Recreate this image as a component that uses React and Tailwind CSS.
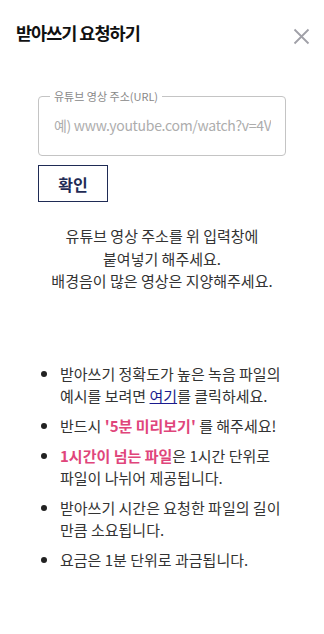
import React from 'react';

const font = { fontFamily: '"Noto Sans CJK KR", "Noto Sans", sans-serif' };

const Bullet = ({ children }) => (
  <li className="flex items-start gap-[13px]">
    <span className="mt-[8px] h-[6px] w-[6px] shrink-0 rounded-full bg-[#222]" />
    <p className="break-keep leading-[22px]">{children}</p>
  </li>
);

const App = () => {
  return (
    <div className="min-h-screen bg-white text-[#333]" style={font}>
      {/* Header */}
      <div className="flex items-center justify-between pl-[16px] pr-[14px] pt-[20px]">
        <h1 className="text-[17.5px] font-bold tracking-[-1px] text-[#111]">받아쓰기 요청하기</h1>
        <button className="mt-[6px] text-[#a0a0a8]">
          <svg width="17" height="17" viewBox="0 0 17 17" fill="none" stroke="currentColor" strokeWidth="1.8">
            <path d="M1.5 1.5l14 14M15.5 1.5l-14 14" />
          </svg>
        </button>
      </div>

      {/* URL input */}
      <div className="mt-[44px] px-[38px]">
        <fieldset className="h-[66px] rounded-[4px] border border-[#c4c4c4] pl-[11px] pr-[14px]">
          <legend className="px-[4px] text-[11px] leading-[12px] text-[#888]">유튜브 영상 주소(URL)</legend>
          <input
            className="mt-[13px] w-full bg-transparent pl-[4px] text-[14px] tracking-[-0.3px] text-[#333] outline-none placeholder:text-[#adadad]"
            placeholder="예) www.youtube.com/watch?v=4V"
            style={font}
          />
        </fieldset>
        <button className="mt-[9px] h-[37px] w-[70px] border-[1.5px] border-[#1f2b55] text-[16px] font-bold text-[#1f2b55]">
          확인
        </button>
      </div>

      {/* Guide */}
      <div className="mt-[23px] text-center text-[15px] leading-[22.5px] text-[#333]">
        <p>유튜브 영상 주소를 위 입력창에</p>
        <p>붙여넣기 해주세요.</p>
        <p>배경음이 많은 영상은 지양해주세요.</p>
      </div>

      {/* Notes */}
      <ul className="mt-[70px] flex flex-col gap-[8px] pl-[41px] pr-[29px] text-[15px] text-[#333]">
        <Bullet>
          받아쓰기 정확도가 높은 녹음 파일의 예시를 보려면{' '}
          <a className="text-[#1a1a8e] underline">여기</a>를 클릭하세요.
        </Bullet>
        <Bullet>
          반드시 <span className="font-bold text-[#e0457b]">'5분 미리보기'</span> 를 해주세요!
        </Bullet>
        <Bullet>
          <span className="font-bold text-[#e0457b]">1시간이 넘는 파일</span>은 1시간 단위로 파일이 나뉘어 제공됩니다.
        </Bullet>
        <Bullet>받아쓰기 시간은 요청한 파일의 길이 만큼 소요됩니다.</Bullet>
        <Bullet>요금은 1분 단위로 과금됩니다.</Bullet>
      </ul>
    </div>
  );
};

export default App;
